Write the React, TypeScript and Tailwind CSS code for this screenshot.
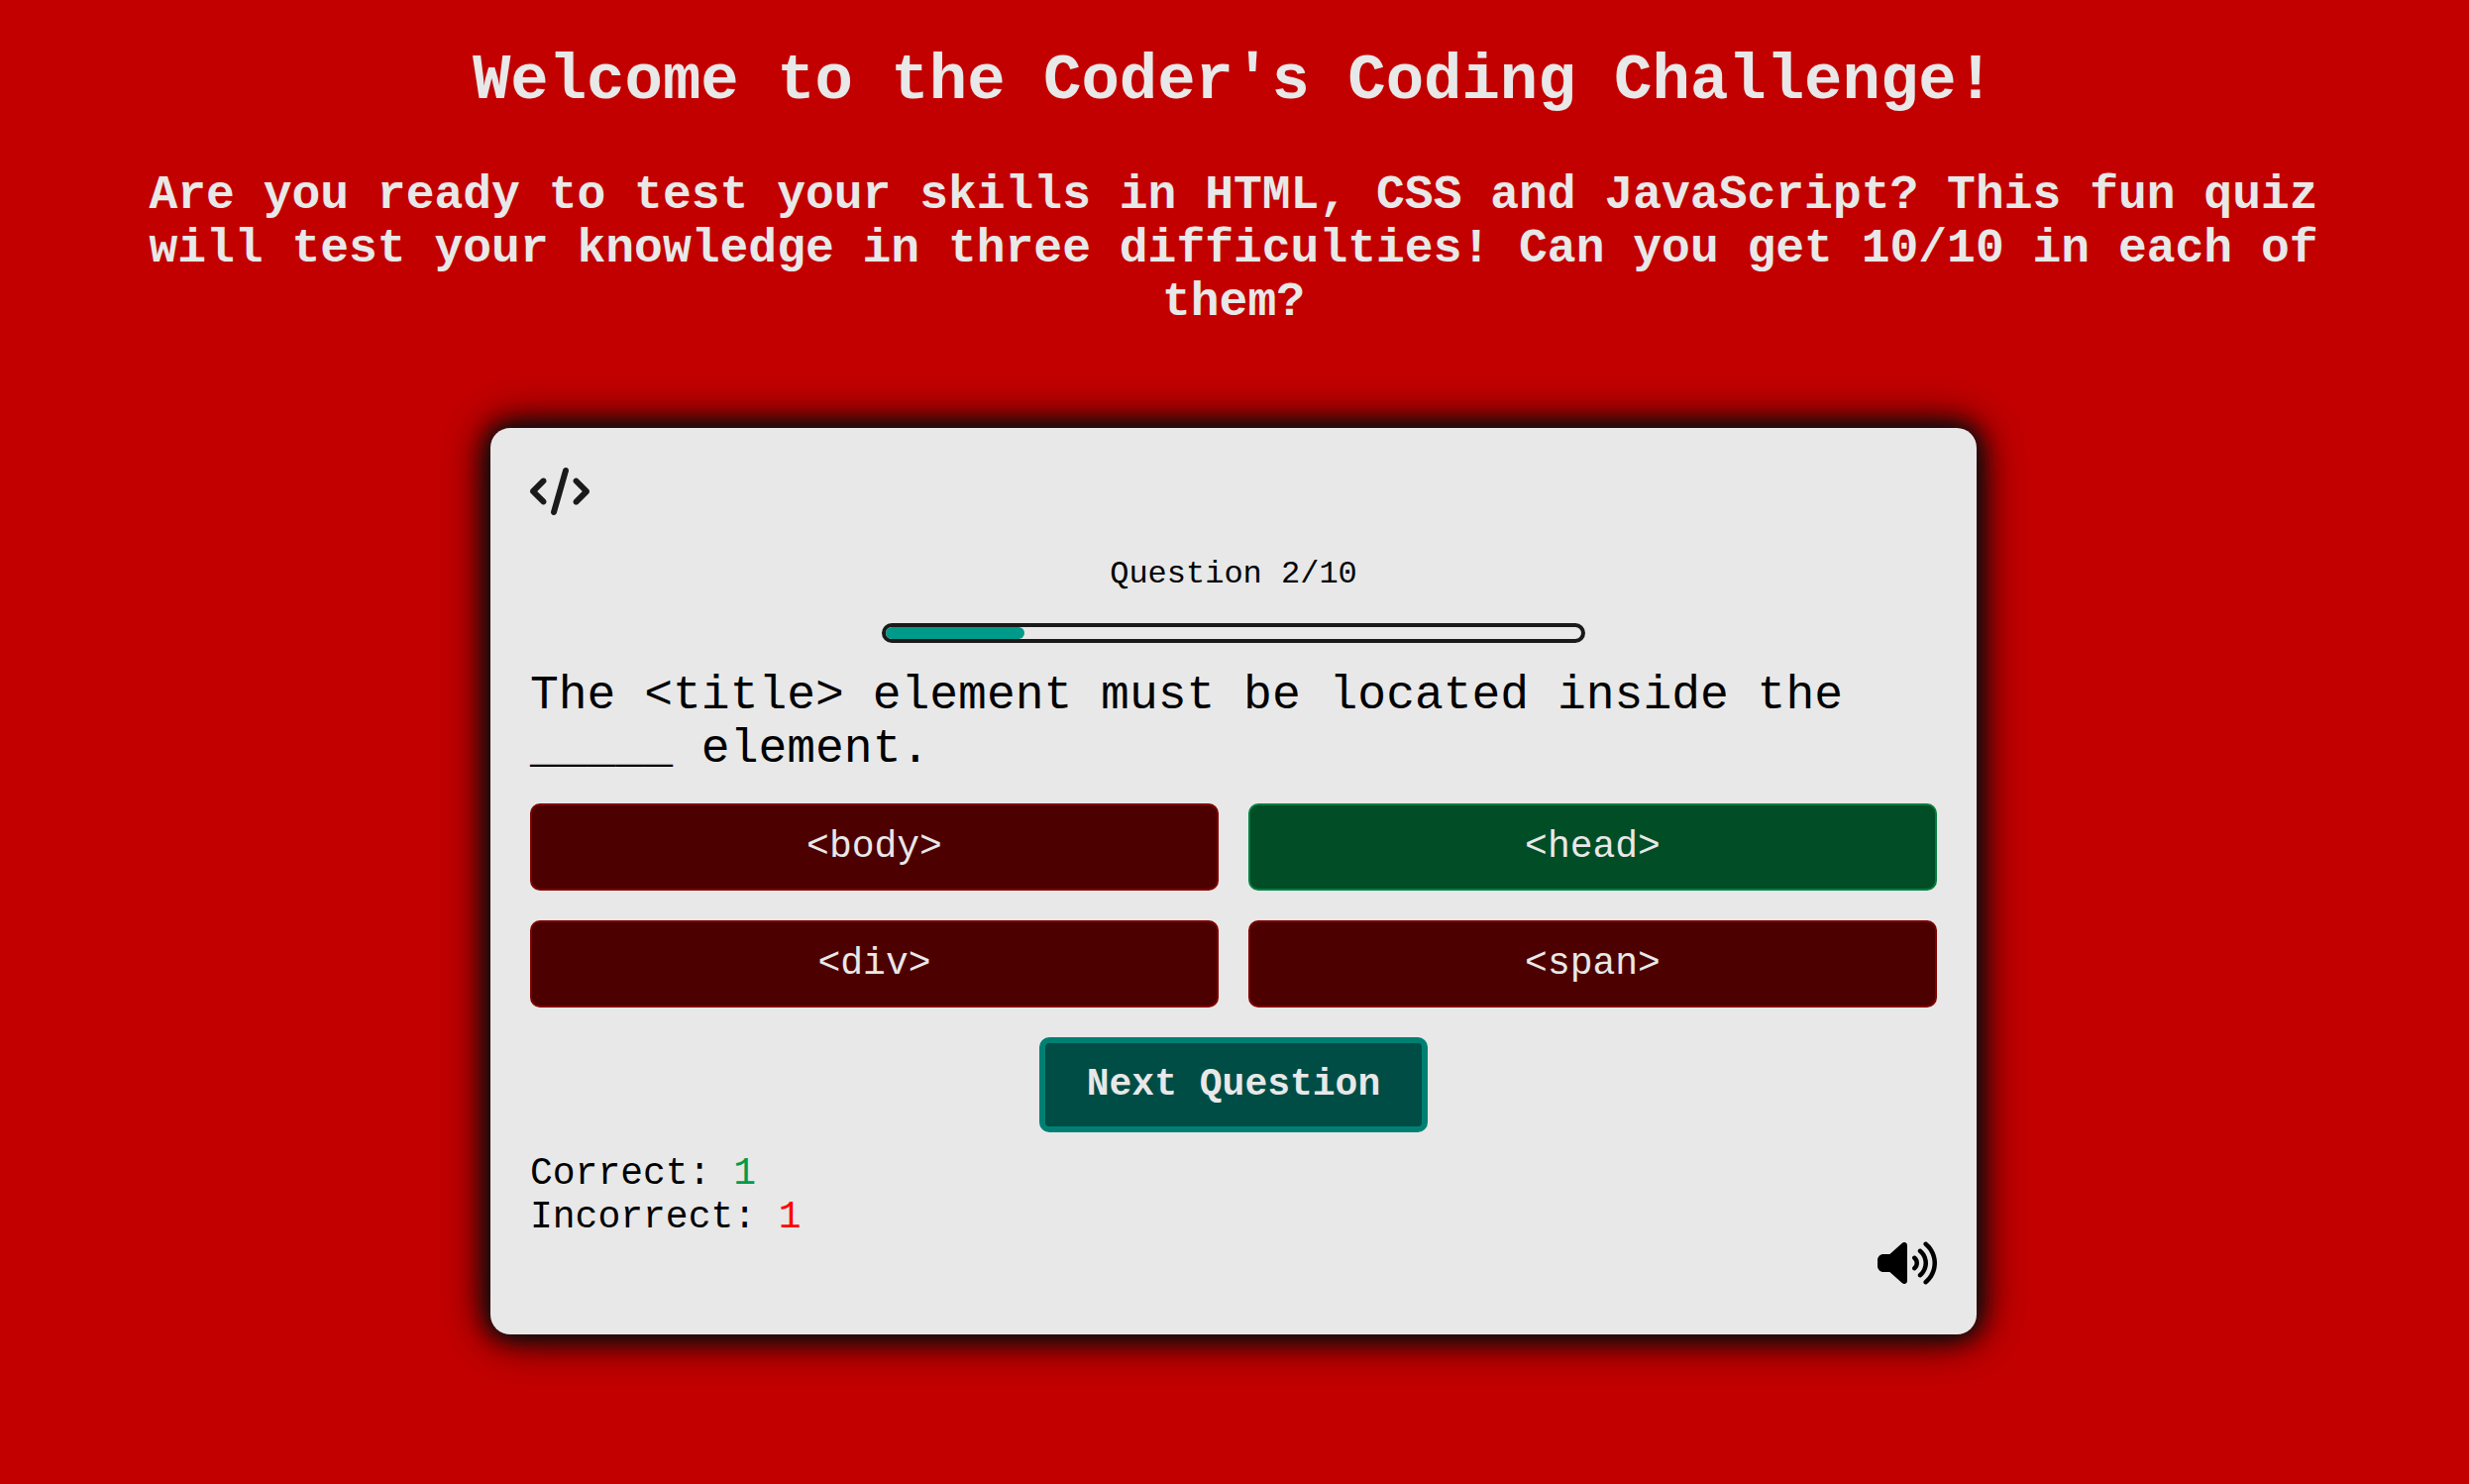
import { FaCode, FaVolumeHigh } from "react-icons/fa6";

const answers = [
  { text: "<body>", correct: false },
  { text: "<head>", correct: true },
  { text: "<div>", correct: false },
  { text: "<span>", correct: false },
];

const total = 10;
const current = 2;

function AnswerButton({ text, correct }: { text: string; correct: boolean }) {
  const tone = correct
    ? "border-[#008040] bg-[#004d26]"
    : "border-[#800000] bg-[#4d0000]";
  return (
    <button
      type="button"
      className={`h-[88px] rounded-[10px] border-2 text-[38px] leading-[44px] text-[#e8e8e8] ${tone}`}
    >
      {text}
    </button>
  );
}

export default function App() {
  return (
    <main className="flex min-h-screen flex-col items-center bg-[#c30000] pr-[102px] pl-[100px] pt-[46px] pb-[120px] font-['Courier_New','Courier','Liberation_Mono',monospace] text-black">
      <h1 className="text-center text-[64px] leading-[72px] font-bold text-[#e8e8e8]">
        Welcome to the Coder's Coding Challenge!
      </h1>
      <h2 className="mt-[52px] text-center text-[48px] leading-[54px] font-bold text-[#e8e8e8]">
        Are you ready to test your skills in HTML, CSS and JavaScript? This fun
        quiz will test your knowledge in three difficulties! Can you get 10/10
        in each of them?
      </h2>

      <section className="mt-[100px] flex w-full max-w-[1500px] flex-col rounded-[20px] bg-[#e8e8e8] px-10 pt-10 pb-12 shadow-[0_0_20px_#0d0d0d,0_0_30px_#0d0d0d,0_0_50px_#0d0d0d]">
        <FaCode className="h-[48px] w-[60px] text-[#1a1a1a]" aria-label="Code" />

        <p className="mt-[42px] text-center text-[32px] leading-[36px]">
          Question {current}/{total}
        </p>
        <div
          role="progressbar"
          aria-label="Quiz progress"
          aria-valuenow={current}
          aria-valuemin={0}
          aria-valuemax={total}
          className="mt-[31px] h-[20px] w-1/2 self-center rounded-full border-4 border-[#1a1a1a]"
        >
          <div
            className="h-full rounded-full bg-[#009a8b]"
            style={{ width: `${(current / total) * 100}%` }}
          />
        </div>

        <p className="mt-[26px] text-[48px] leading-[54px]">
          The &lt;title&gt; element must be located inside the _____ element.
        </p>

        <div className="mt-[28px] grid grid-cols-2 gap-[30px]">
          {answers.map((a) => (
            <AnswerButton key={a.text} text={a.text} correct={a.correct} />
          ))}
        </div>

        <button
          type="button"
          className="mt-[30px] h-[96px] self-center rounded-[10px] border-[6px] border-[#008073] bg-[#004d45] px-[42px] text-[38px] leading-[44px] font-bold text-[#e8e8e8]"
        >
          Next Question
        </button>

        <div className="mt-[20px] text-[38px] leading-[44px]">
          <p>
            Correct: <span className="text-[#009a4e]">1</span>
          </p>
          <p>
            Incorrect: <span className="text-[#ff0000]">1</span>
          </p>
        </div>

        <button type="button" aria-label="Toggle sound" className="self-end">
          <FaVolumeHigh className="h-[48px] w-[60px]" />
        </button>
      </section>
    </main>
  );
}
